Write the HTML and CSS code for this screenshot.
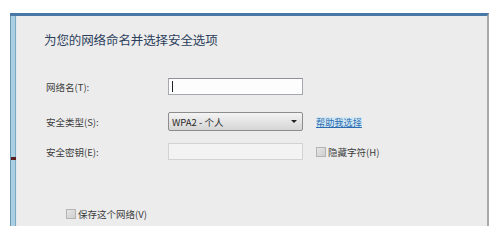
FILE: index.html
```html
<!DOCTYPE html>
<html lang="zh-CN">
<head>
<meta charset="utf-8">
<title>为您的网络命名并选择安全选项</title>
<link rel="stylesheet" href="styles.css">
</head>
<body>
<div class="window">
  <div class="frame-left"><div class="frame-mark"></div></div>
  <div class="panel">
    <h1 class="title">为您的网络命名并选择安全选项</h1>
    <div class="form">
      <div class="row row-name">
        <label class="label">网络名(T):</label>
        <div class="input input-active"><span class="caret"></span></div>
      </div>
      <div class="row row-type">
        <label class="label">安全类型(S):</label>
        <div class="select"><span class="select-text">WPA2 - 个人</span><span class="arrow"></span></div>
        <a class="link" href="#">帮助我选择</a>
      </div>
      <div class="row row-key">
        <label class="label">安全密钥(E):</label>
        <div class="input input-disabled"></div>
        <span class="check"><span class="box"></span><span class="check-text">隐藏字符(H)</span></span>
      </div>
    </div>
    <div class="save">
      <span class="check"><span class="box"></span><span class="check-text">保存这个网络(V)</span></span>
    </div>
  </div>
</div>
</body>
</html>
```

FILE: styles.css
```css
html, body {
  margin: 0;
  padding: 0;
  background: #ffffff;
}
body {
  width: 498px;
  height: 240px;
  overflow: hidden;
  font-family: "Noto Sans CJK SC", "Noto Sans", "Liberation Sans", sans-serif;
  color: #3a3a3a;
}
.window {
  display: flex;
  margin: 13px 0 0 10px;
  width: 479px;
  height: 213px;
  border-top: 3px solid #4a78a6;
  box-sizing: border-box;
  border-right: 2px solid #a9a9a9;
}
.frame-left {
  width: 7px;
  flex: none;
  background: linear-gradient(to right, #6b97b0 0, #6b97b0 1px, #a9d0e2 1px, #a9d0e2 5px, #7fa9be 5px, #7fa9be 6px, #dfe8ec 6px);
}
.frame-mark {
  margin-top: 141px;
  height: 3px;
  margin-left: 1px;
  width: 5px;
  background: #5b1f22;
}
.panel {
  flex: 1;
  background: #ececec;
  padding: 16px 0 0 27px;
  box-sizing: border-box;
}
.title {
  margin: 0;
  font-size: 12.5px;
  line-height: 16px;
  font-weight: normal;
  color: #2d3f5c;
  letter-spacing: -0.1px;
}
.form {
  margin-top: 30px;
  padding-left: 2px;
}
.row {
  display: flex;
  align-items: center;
}
.row-type { margin-top: 17px; }
.row-key { margin-top: 12px; }
.label {
  width: 122px;
  flex: none;
  font-size: 9.5px;
  color: #3c3c3c;
}
.input {
  width: 135px;
  height: 17px;
  box-sizing: border-box;
  flex: none;
  position: relative;
}
.input-active {
  background: #fdfdfd;
  border: 1px solid #a5a8ad;
  border-top-color: #8e9196;
}
.caret {
  position: absolute;
  left: 3px;
  top: 2px;
  width: 1px;
  height: 11px;
  background: #222;
}
.input-disabled {
  background: #f3f3f3;
  border: 1px solid #d3d3d3;
}
.select {
  width: 135px;
  height: 19px;
  box-sizing: border-box;
  flex: none;
  display: flex;
  align-items: center;
  justify-content: space-between;
  padding: 0 5px 0 3px;
  border: 1px solid #8d8d8d;
  border-radius: 2px;
  background: linear-gradient(to bottom, #f4f4f4, #e4e4e4 50%, #d6d6d6);
}
.select-text {
  font-size: 9.5px;
  color: #2a2a2a;
  font-family: "Noto Sans CJK SC", "Liberation Sans", sans-serif;
}
.arrow {
  width: 0;
  height: 0;
  border-left: 3px solid transparent;
  border-right: 3px solid transparent;
  border-top: 3px solid #222;
}
.link {
  margin-left: 13px;
  font-size: 9.2px;
  color: #2d6bb0;
  text-decoration: underline;
  background: #d2e9f5;
  line-height: 10px;
}
.check {
  display: flex;
  align-items: center;
}
.row .check { margin-left: 13px; }
.box {
  width: 10px;
  height: 10px;
  box-sizing: border-box;
  border: 1px solid #b4b4b4;
  background: linear-gradient(to bottom right, #e6e6e6, #cfcfcf);
  flex: none;
}
.check-text {
  margin-left: 2px;
  font-size: 9.5px;
  color: #3a3a3a;
}
.save {
  margin-top: 47px;
  padding-left: 22px;
}
```
